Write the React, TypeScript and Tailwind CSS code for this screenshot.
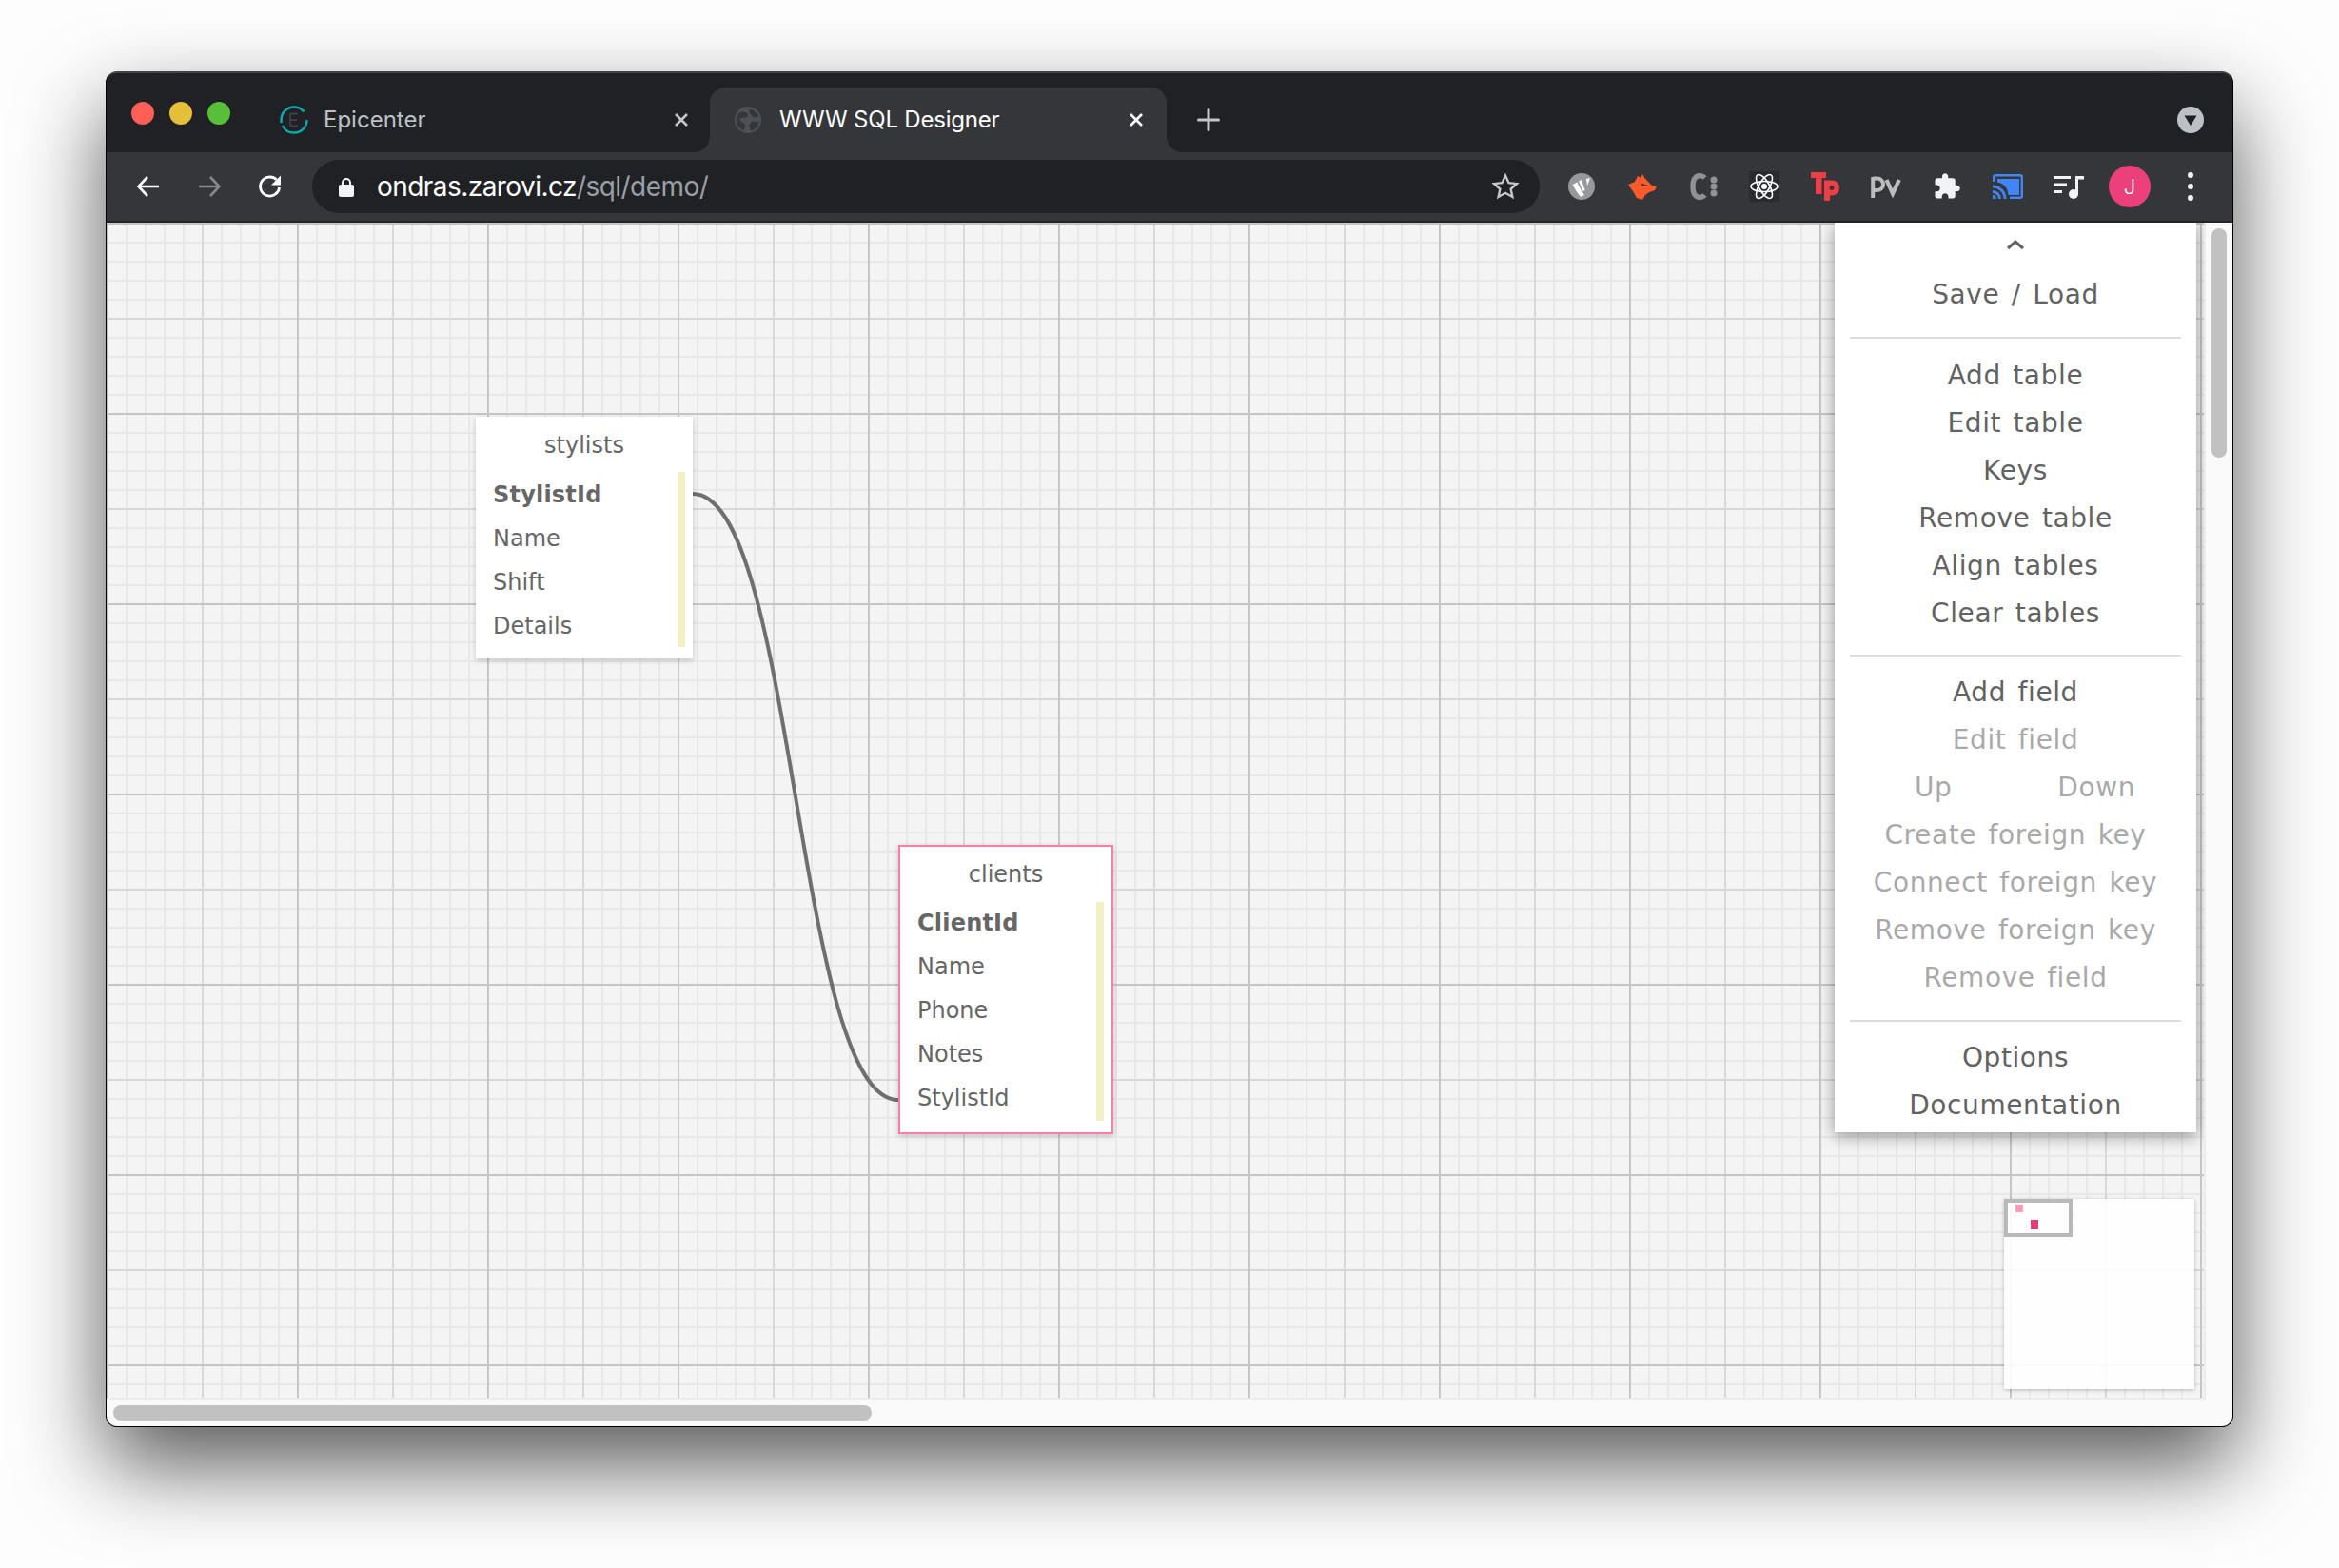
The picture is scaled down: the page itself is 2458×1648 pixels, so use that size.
import React from "react";

const Ui = "font-['Inter','Liberation_Sans',sans-serif]";
const Dj = "font-['DejaVu_Sans',sans-serif]";

const TableBox = ({ name, rows, className, barClass, nameClass, rowClass }: any) => (
  <div className={className}>
    <div className={nameClass}>{name}</div>
    {rows.map((r: string, i: number) => (
      <div key={r} className={`${rowClass} ${i === 0 ? "font-bold tracking-[0.2px]" : ""}`}>{r}</div>
    ))}
    <div className={barClass} />
  </div>
);

const MI = ({ children, off }: { children: React.ReactNode; off?: boolean }) => (
  <div className={`h-[50px] leading-[50px] text-center ${off ? "text-[#a9a9a9]" : "text-[#626262]"}`}>{children}</div>
);
const Hr = () => <div className="h-[2px] bg-[#dddddd] mx-4" />;

const Slot = ({ children, className }: { children: React.ReactNode; className?: string }) => (
  <div className={`w-[64px] h-[44px] flex items-center justify-center shrink-0 ${className || ""}`}>{children}</div>
);

export default function App() {
  return (
    <div className="w-[2458px] h-[1648px] bg-[#fdfdfd] overflow-hidden pt-[75px] pl-[111px]">
      <div className="w-[2236px] h-[1425px] flex flex-col rounded-[12px] overflow-hidden border-t-2 border-x border-b border-t-[#444444] border-x-black border-b-black bg-[#202124] relative shadow-[0_40px_90px_rgba(0,0,0,0.65)]">
        {/* title bar */}
        <div className="h-[83px] flex bg-[#202124] relative shrink-0">
          <div className="w-[180px] pl-[26px] pt-[30px] flex gap-4 shrink-0">
            <span className="w-6 h-6 rounded-full bg-[#ff5f57]" />
            <span className="w-6 h-6 rounded-full bg-[#e6bf3a]" />
            <span className="w-6 h-6 rounded-full bg-[#57c038]" />
          </div>
          {/* inactive tab */}
          <div className="w-[454px] pt-[15px] h-full flex items-start shrink-0">
            <div className="h-[68px] w-full flex items-center pl-[2px] gap-[16px]">
              <svg width="30" height="30" viewBox="0 0 30 30" className="shrink-0">
                <circle cx="15" cy="15" r="13.5" fill="none" stroke="#12a5ad" strokeWidth="2.5" strokeDasharray="36 3 36 10" />
                <path d="M11 8.5h8M11 15h7M11 21.500h8M11 8.500v13" fill="none" stroke="#3f4144" strokeWidth="1.8" />
              </svg>
              <span className={`${Ui} text-[24px] text-[#bdc1c6] w-[360px] shrink-0`}>Epicenter</span>
              <svg width="16" height="16" viewBox="0 0 16 16" className="-ml-[8px] shrink-0">
                <path d="M2 2l12 12M14 2L2 14" stroke="#c4c7cb" strokeWidth="2.6" />
              </svg>
            </div>
          </div>
          {/* active tab */}
          <div className="w-[480px] h-[68px] mt-[15px] rounded-t-[16px] bg-[#35363a] flex items-center pl-[26px] gap-[19px] relative shrink-0">
            <svg width="28" height="28" viewBox="0 0 32 32" className="shrink-0">
              <circle cx="16" cy="16" r="16" fill="#4d5055" />
              <path d="M6 7c4-2 7 0 9 1s1 4-1 5-5 0-7 1 1 4 4 6 1 6 0 9C5 26 2 22 2 16c0-4 2-7 4-9zM19 3c4 1 8 4 10 9l-5 1c-3 0-3-3-5-4s-2-4 0-6zM22 18h7c0 2-1 5-3 7s-5 4-7 4c0-3-2-5-1-7s2-4 4-4z" fill="#35363a" />
            </svg>
            <span className={`${Ui} text-[24px] tracking-[-0.2px] text-white w-[350px] shrink-0`}>WWW SQL Designer</span>
            <svg width="16" height="16" viewBox="0 0 16 16" className="-ml-[2px] shrink-0">
              <path d="M2 2l12 12M14 2L2 14" stroke="#fff" strokeWidth="2.6" />
            </svg>
            <div className="absolute -left-4 bottom-0 w-4 h-4 bg-[radial-gradient(circle_at_0_0,#202124_15.5px,#35363a_16px)]" />
            <div className="absolute -right-4 bottom-0 w-4 h-4 bg-[radial-gradient(circle_at_100%_0,#202124_15.5px,#35363a_16px)]" />
          </div>
          <div className="w-[64px] flex items-center justify-center pt-[15px] ml-[12px] shrink-0">
            <svg width="24" height="24" viewBox="0 0 24 24">
              <path d="M12 1.500v21M1.500 12h21" stroke="#c4c7cb" strokeWidth="3" strokeLinecap="round" />
            </svg>
          </div>
          <div className="flex-1 flex justify-end items-center pt-[15px] pr-[30px]">
            <svg width="28" height="28" viewBox="0 0 28 28">
              <circle cx="14" cy="14" r="14" fill="#bdc1c6" />
              <path d="M7.500 9.500h13L14 20z" fill="#202124" />
            </svg>
          </div>
        </div>
        {/* toolbar */}
        <div className="h-[74px] bg-[#35363a] flex items-center border-b-2 border-b-[#232427] shrink-0">
          <div className="flex items-center w-[216px] pl-[12px] shrink-0">
            <Slot>
              <svg width="28" height="28" viewBox="0 0 28 28"><path d="M25 14H4M13 4L3.500 14 13 24" fill="none" stroke="#fff" strokeWidth="2.6" /></svg>
            </Slot>
            <Slot>
              <svg width="28" height="28" viewBox="0 0 28 28"><path d="M3 14h21M15 4l9.500 10L15 24" fill="none" stroke="#85878a" strokeWidth="2.6" /></svg>
            </Slot>
            <Slot>
              <svg width="28" height="28" viewBox="0 0 28 28"><path d="M23.500 15a10 10 0 1 1-3-8.200" fill="none" stroke="#fff" strokeWidth="2.800" /><path d="M25 2.500v10H15z" fill="#fff" /></svg>
            </Slot>
          </div>
          <div className="w-[1290px] h-[56px] rounded-full bg-[#202124] flex items-center shrink-0 pl-[28px] pr-[21px]">
            <svg width="16" height="21" viewBox="0 0 16 21" className="shrink-0">
              <path d="M4 9V6a4 4 0 0 1 8 0v3" fill="none" stroke="#f1f3f4" strokeWidth="2" />
              <rect x="0" y="8" width="16" height="13" rx="2" fill="#f1f3f4" />
            </svg>
            <span className={`${Ui} text-[28px] tracking-[-0.55px] ml-[24px] text-white flex-1`}>
              ondras.zarovi.cz<span className="text-[#9aa0a6]">/sql/demo/</span>
            </span>
            <svg width="30" height="30" viewBox="0 0 24 24">
              <path d="M12 2.800l2.800 6.200 6.700.7-5 4.500 1.400 6.600-5.900-3.400-5.900 3.400 1.400-6.600-5-4.500 6.700-.7z" fill="none" stroke="#c4c7cb" strokeWidth="1.900" />
            </svg>
          </div>
          <div className="flex items-center pl-[12px]">
            <Slot>
              <svg width="28" height="28" viewBox="0 0 28 28">
                <circle cx="14" cy="14" r="14" fill="#979899" />
                <path d="M4.500 12l5-2.500c1.500 4 4 8 7.500 13.500l-4 2C10 21 7 17 4.500 12z" fill="#fff" />
                <path d="M11 8.500l3-1.500 3.500 11-2 1zM19 6l4-1-3 8z" fill="#fff" />
              </svg>
            </Slot>
            <Slot>
              <svg width="30" height="27" viewBox="0 0 30 27">
                <path d="M0 11l7-3 3-6 3 2 2-4 3 5 4 4 3 3 5 1-2 4-6 2-4 3-3 5-6-2-4-7-3-4z" fill="#ff5a2c" />
                <path d="M13 9.500l8 2.500-6 .5z" fill="#35363a" />
              </svg>
            </Slot>
            <Slot>
              <svg width="29" height="30" viewBox="0 0 29 30">
                <path d="M15.500 6C13 3 3 .5 3 15s10 12 12.500 9" fill="none" stroke="#909192" strokeWidth="5.400" />
                <circle cx="25" cy="8" r="3.500" fill="#909192" />
                <circle cx="25" cy="15" r="3.500" fill="#909192" />
                <circle cx="25" cy="22" r="3.500" fill="#909192" />
              </svg>
            </Slot>
            <Slot>
              <div className="w-8 h-8 bg-[#2a2b2e] flex items-center justify-center">
                <svg width="30" height="30" viewBox="-15 -15 30 30">
                  <g fill="none" stroke="#fff" strokeWidth="1.600">
                    <ellipse rx="14" ry="5.500" />
                    <ellipse rx="14" ry="5.500" transform="rotate(60)" />
                    <ellipse rx="14" ry="5.500" transform="rotate(120)" />
                  </g>
                  <circle r="3" fill="#fff" />
                </svg>
              </div>
            </Slot>
            <Slot>
              <svg width="30" height="30" viewBox="0 0 30 30">
                <path d="M0 0h16v6h-4.500v17H5V6H0z" fill="#ee3f46" />
                <path fillRule="evenodd" d="M14 8.500h8a8 8 0 0 1 0 16h-2V30h-6zM22 14a2.500 2.500 0 1 0 0 5 2.500 2.500 0 0 0 0-5z" fill="#ee3f46" />
              </svg>
            </Slot>
            <Slot>
              <svg width="32" height="23" viewBox="0 0 32 23">
                <path d="M2.200 23V1M2.200 2.500h4.600a6 6 0 0 1 0 12.500H2.200" fill="none" stroke="#bcbcbc" strokeWidth="4" />
                <path d="M16.500 4l6.500 14.500L29.800 4" fill="none" stroke="#bcbcbc" strokeWidth="4.200" />
              </svg>
            </Slot>
            <Slot>
              <svg width="30" height="30" viewBox="0 0 24 24">
                <path d="M20.500 11H19V7c0-1.100-.9-2-2-2h-4V3.500C13 2.120 11.880 1 10.500 1S8 2.120 8 3.500V5H4c-1.100 0-2 .9-2 2v3.800h1.500c1.490 0 2.700 1.210 2.700 2.700s-1.210 2.700-2.700 2.700H2V20c0 1.100.9 2 2 2h3.800v-1.500c0-1.490 1.210-2.700 2.700-2.700s2.700 1.210 2.700 2.700V22H17c1.100 0 2-.9 2-2v-4h1.500c1.380 0 2.500-1.120 2.500-2.500S21.880 11 20.500 11z" fill="#f1f3f4" />
              </svg>
            </Slot>
            <Slot>
              <svg width="32" height="26" viewBox="0 0 32 26">
                <path d="M0 8V3a3 3 0 0 1 3-3h26a3 3 0 0 1 3 3v20a3 3 0 0 1-3 3H18v-2.500h11.500v-21h-27V8z" fill="#4285f4" />
                <path d="M5 5h23v17H16.500C16 14 11 9 5 8.500z" fill="#4285f4" />
                <path d="M0 26h4a4 4 0 0 0-4-4zM0 17v3a6 6 0 0 1 6 6h3a9 9 0 0 0-9-9zM0 11.500v3A11.500 11.500 0 0 1 11.500 26h3A14.500 14.500 0 0 0 0 11.500z" fill="#4285f4" />
              </svg>
            </Slot>
            <Slot>
              <svg width="32" height="25" viewBox="0 0 32 25">
                <path d="M0 1h18v3H0zM0 8.500h14v3H0zM0 16h9v3H0z" fill="#f1f3f4" />
                <path d="M23 1h9v3.500h-6V20h-3z" fill="#f1f3f4" />
                <circle cx="21" cy="20" r="5" fill="#f1f3f4" />
              </svg>
            </Slot>
            <Slot>
              <div className={`w-[44px] h-[44px] rounded-full bg-[#ec407a] text-[#fff] flex items-center justify-center ${Ui} text-[22px] font-light`}>J</div>
            </Slot>
            <Slot>
              <div className="flex flex-col gap-[6px]">
                <span className="w-[6px] h-[6px] rounded-full bg-[#f1f3f4]" />
                <span className="w-[6px] h-[6px] rounded-full bg-[#f1f3f4]" />
                <span className="w-[6px] h-[6px] rounded-full bg-[#f1f3f4]" />
              </div>
            </Slot>
          </div>
        </div>
        {/* content */}
        <div className="flex-1 min-h-0 bg-[#fafafa] flex flex-col">
          <div className="flex-1 min-h-0 flex">
            <div className={`flex-1 relative overflow-hidden border-r-2 border-b-2 border-[#ececec] ${Dj} bg-[#f4f4f4] bg-[linear-gradient(to_right,#c6c6c6_2px,transparent_2px),linear-gradient(to_bottom,#c6c6c6_2px,transparent_2px),linear-gradient(to_right,#d8d8d8_2px,transparent_2px),linear-gradient(to_bottom,#d8d8d8_2px,transparent_2px),linear-gradient(to_right,#e8e8e8_2px,transparent_2px),linear-gradient(to_bottom,#e8e8e8_2px,transparent_2px)] bg-[size:200px_200px,200px_200px,100px_100px,100px_100px,20px_20px,20px_20px] bg-[position:0_0]`}>
              <svg className="absolute left-0 top-0" width="1200" height="1200">
                <path d="M616 285 C 724 285, 724 922, 832 922" fill="none" stroke="#6f6f6f" strokeWidth="4" />
              </svg>
              <TableBox
                name="stylists"
                rows={["StylistId", "Name", "Shift", "Details"]}
                className="absolute left-[388px] top-[204px] w-[228px] h-[254px] bg-white shadow-[0_2px_6px_rgba(0,0,0,0.2)] text-[#666666]"
                nameClass="h-[60px] leading-[60px] text-center text-[24px] text-[#666666]"
                rowClass="h-[46px] leading-[46px] pl-[18px] text-[24px] -translate-y-[1px]"
                barClass="absolute left-[212px] top-[58px] w-2 h-[184px] bg-[#f3f0c3]"
              />
              <TableBox
                name="clients"
                rows={["ClientId", "Name", "Phone", "Notes", "StylistId"]}
                className="absolute left-[832px] top-[654px] w-[226px] h-[304px] bg-white border-2 border-[#ff7ea8] shadow-[0_2px_6px_rgba(0,0,0,0.2)] text-[#666666]"
                nameClass="h-[58px] leading-[58px] text-center text-[24px] text-[#666666]"
                rowClass="h-[46px] leading-[46px] pl-[18px] text-[24px] -translate-y-[1px]"
                barClass="absolute left-[206px] top-[58px] w-2 h-[230px] bg-[#f3f0c3]"
              />
              {/* menu */}
              <div className="absolute left-[1816px] top-0 w-[380px] h-[956px] bg-white shadow-[0_4px_16px_rgba(0,0,0,0.4)] text-[28px] tracking-[0.6px] [word-spacing:3px]">
                <div className="h-[51px] flex justify-center pt-[17px]">
                  <svg width="20" height="12" viewBox="0 0 20 12"><path d="M2 10l8-7 8 7" fill="none" stroke="#626262" strokeWidth="3" /></svg>
                </div>
                <MI>Save / Load</MI>
                <div className="h-[19px]" />
                <Hr />
                <div className="h-[14px]" />
                <MI>Add table</MI>
                <MI>Edit table</MI>
                <MI>Keys</MI>
                <MI>Remove table</MI>
                <MI>Align tables</MI>
                <MI>Clear tables</MI>
                <div className="h-[18px]" />
                <Hr />
                <div className="h-[13px]" />
                <MI>Add field</MI>
                <MI off>Edit field</MI>
                <div className="h-[50px] leading-[50px] text-[#a9a9a9] flex justify-between pl-[84px] pr-[64px]">
                  <span>Up</span>
                  <span>Down</span>
                </div>
                <MI off>Create foreign key</MI>
                <MI off>Connect foreign key</MI>
                <MI off>Remove foreign key</MI>
                <MI off>Remove field</MI>
                <div className="h-[19px]" />
                <Hr />
                <div className="h-[13px]" />
                <MI>Options</MI>
                <MI>Documentation</MI>
              </div>
              {/* minimap */}
              <div className="absolute left-[1994px] top-[1026px] w-[200px] h-[200px] bg-white/90 shadow-[0_1px_4px_rgba(0,0,0,0.25)]">
                <div className="absolute left-0 top-0 w-[72px] h-[40px] border-[4px] border-[#b9b9b9]" />
                <div className="absolute left-[12px] top-[6px] w-2 h-2 bg-[#ff9dbd]" />
                <div className="absolute left-[28px] top-[22px] w-2 h-[10px] bg-[#e33d76]" />
              </div>
            </div>
            <div className="w-[28px] shrink-0 pt-[6px] pl-[6px]">
              <div className="w-4 h-[241px] rounded-full bg-[#c1c1c1]" />
            </div>
          </div>
          <div className="h-[28px] shrink-0 pl-[7px] pt-[6px]">
            <div className="w-[797px] h-4 rounded-full bg-[#c1c1c1]" />
          </div>
        </div>
      </div>
    </div>
  );
}
